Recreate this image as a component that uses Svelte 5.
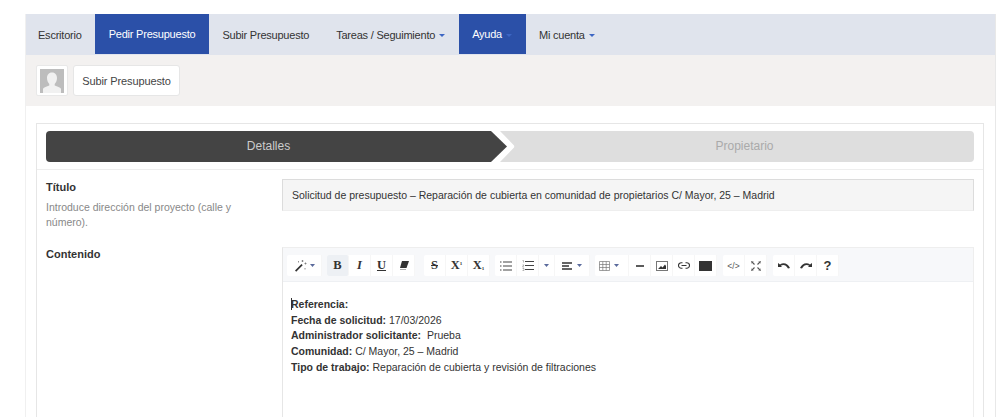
<script lang="ts">
  const navItems = [
    { label: 'Escritorio' },
    { label: 'Pedir Presupuesto', active: true },
    { label: 'Subir Presupuesto' },
    { label: 'Tareas / Seguimiento', caret: true },
    { label: 'Ayuda', caret: true, active: true },
    { label: 'Mi cuenta', caret: true }
  ];
</script>

{#snippet caret()}
  <svg class="tb-caret" width="5" height="3" viewBox="0 0 5 3"><path d="M0 0h5L2.500 3z" fill="#5a6a9c" /></svg>
{/snippet}

<div class="page">
  <nav class="nav">
    {#each navItems as item}
      <a class="nav-item" class:active={item.active} href="#top">
        {item.label}
        {#if item.caret}<span class="nav-caret"></span>{/if}
      </a>
    {/each}
  </nav>

  <div class="subheader">
    <div class="avatar">
      <svg width="24" height="24" viewBox="0 0 24 24">
        <rect width="24" height="24" fill="#bdbdbd" />
        <path d="M12 3.500c3.400 0 5 2.600 5 5.600 0 2.500-1 4.600-2.300 5.800v1.600c2.600 1 5.400 1.900 6.300 3.200V24H3v-4.300c.9-1.300 3.700-2.200 6.300-3.200v-1.600C8 13.700 7 11.600 7 9.100c0-3 1.600-5.600 5-5.600z" fill="#f1f1f1" />
      </svg>
    </div>
    <button class="sub-btn">Subir Presupuesto</button>
  </div>

  <section class="card">
    <div class="steps">
      <div class="step step-done">Detalles</div>
      <div class="step step-next">Propietario</div>
    </div>

    <div class="rows">
      <div class="row row-title">
        <div class="label-col">
          <div class="label">Título</div>
          <p class="help">Introduce dirección del proyecto (calle y número).</p>
        </div>
        <div class="title-input">Solicitud de presupuesto – Reparación de cubierta en comunidad de propietarios C/ Mayor, 25 – Madrid</div>
      </div>

      <div class="row">
        <div class="label-col"><div class="label">Contenido</div></div>
        <div class="editor">
          <div class="toolbar">
            <div class="group">
              <span class="tb tb-wand">
                <svg width="13" height="13" viewBox="0 0 13 13">
                  <path d="M1 11.500l6.500-6.500 1.200 1.200L2.200 12.700z" fill="#333" />
                  <path d="M8.500 1v2M7.500 2h2M11.500 3.500v2M10.500 4.500h2M11 9v1.500M4.500 2v1.500" stroke="#777" stroke-width=".8" />
                </svg>
                {@render caret()}
              </span>
            </div>

            <div class="group">
              <span class="tb serif pressed"><b>B</b></span>
              <span class="tb serif"><b><i>I</i></b></span>
              <span class="tb serif"><b class="under">U</b></span>
              <span class="tb">
                <svg width="10" height="9" viewBox="0 0 10 9"><path d="M3 0h7L7.500 7H1l.8-3z" fill="#333" /><path d="M1 8.500h6" stroke="#999" stroke-width=".8" /></svg>
              </span>
            </div>

            <div class="group group-gap">
              <span class="tb serif"><b class="strike">S</b></span>
              <span class="tb serif"><b>X<sup>1</sup></b></span>
              <span class="tb serif"><b>X<sub>1</sub></b></span>
            </div>

            <div class="group">
              <span class="tb">
                <svg width="12" height="10" viewBox="0 0 12 10"><path d="M0 1h1.500M3 1h9M0 5h1.500M3 5h9M0 9h1.500M3 9h9" stroke="#444" stroke-width="1.200" /></svg>
              </span>
              <span class="tb">
                <svg width="12" height="11" viewBox="0 0 12 11"><path d="M3 1.500h9M3 5.500h9M3 9.500h9" stroke="#444" stroke-width="1.200" /><path d="M.5.500h1v2M.5 5h1.500L.5 7h1.500M.5 8.500h1.500v2h-1.500" stroke="#888" stroke-width=".6" fill="none" /></svg>
              </span>
              <span class="tb tb-narrow">{@render caret()}</span>
              <span class="tb tb-align">
                <svg width="10" height="8" viewBox="0 0 10 8"><path d="M0 1h10M0 4h7M0 7h10" stroke="#333" stroke-width="1.300" /></svg>
                {@render caret()}
              </span>
            </div>

            <div class="group">
              <span class="tb tb-table">
                <svg width="11" height="10" viewBox="0 0 11 10"><path d="M.5.500h10v9H.5zM.5 3.500h10M.5 6.500h10M3.800.500v9M7.200.500v9" stroke="#777" fill="none" stroke-width=".7" /></svg>
                {@render caret()}
              </span>
              <span class="tb"><svg width="8" height="2" viewBox="0 0 8 2"><path d="M0 1h8" stroke="#333" stroke-width="1.600" /></svg></span>
              <span class="tb">
                <svg width="12" height="10" viewBox="0 0 12 10"><rect x=".5" y=".5" width="11" height="9" fill="none" stroke="#777" /><path d="M2 8l3-3 1.500 1.500L9 3.500 10 5v3z" fill="#333" /></svg>
              </span>
              <span class="tb">
                <svg width="12" height="7" viewBox="0 0 12 7"><path d="M4.500.7H3.300a2.800 2.800 0 0 0 0 5.600h1.200M7.500.7h1.200a2.800 2.800 0 0 1 0 5.600H7.500M3.500 3.500h5" fill="none" stroke="#333" stroke-width="1.100" /></svg>
              </span>
              <span class="tb"><span class="swatch"></span></span>
            </div>

            <div class="group group-code">
              <span class="tb tb-code">&lt;/&gt;</span>
              <span class="tb">
                <svg width="10" height="10" viewBox="0 0 10 10"><path d="M1 1l2.500 2.500M9 1L6.500 3.500M1 9l2.500-2.500M9 9L6.500 6.500" stroke="#555" stroke-width="1.100" /><path d="M0 2.500V0h2.500M7.500 0H10v2.500M10 7.500V10H7.500M2.500 10H0V7.500" stroke="#555" fill="none" stroke-width=".9" /></svg>
              </span>
            </div>

            <div class="group">
              <span class="tb">
                <svg width="12" height="8" viewBox="0 0 12 8"><path d="M0 1v4h4L2.800 3.800C5 2.200 8 2.700 10 6.500L12 6C10 1.500 5.500 0 2 2.500z" fill="#333" /></svg>
              </span>
              <span class="tb">
                <svg width="12" height="8" viewBox="0 0 12 8"><path d="M12 1v4H8l1.200-1.200C7 2.200 4 2.700 2 6.500L0 6C2 1.500 6.500 0 10 2.500z" fill="#333" /></svg>
              </span>
              <span class="tb tb-help">?</span>
            </div>
          </div>

          <div class="editor-body">
            <p><span class="cursor"></span><strong>Referencia:</strong></p>
            <p><strong>Fecha de solicitud:</strong> 17/03/2026</p>
            <p><strong>Administrador solicitante:</strong>&nbsp; Prueba</p>
            <p><strong>Comunidad:</strong> C/ Mayor, 25 – Madrid</p>
            <p><strong>Tipo de trabajo:</strong> Reparación de cubierta y revisión de filtraciones</p>
          </div>
        </div>
      </div>
    </div>
  </section>
</div>

<style>
  :global(body) {
    margin: 0;
    background: #fff;
    overflow: hidden;
  }

  .page {
    box-sizing: border-box;
    height: 403px;
    overflow: hidden;
    margin: 14px 4px 0 25px;
    border-right: 1px solid #e8e8e8;
    border-left: 1px solid #f0f0f0;
    font-family: "Liberation Sans", Arial, sans-serif;
    color: #333;
  }

  .nav {
    display: flex;
    height: 41px;
    background: #e0e4ed;
  }

  .nav-item {
    display: flex;
    align-items: center;
    gap: 4px;
    padding: 0 13.500px;
    font-size: 11px;
    color: #333;
    text-decoration: none;
    letter-spacing: -0.22px;
  }

  .nav-item:first-child {
    padding-left: 12px;
  }

  .nav-item.active {
    background: #2b50a8;
    color: #fff;
    height: 40px;
  }

  .nav-caret {
    width: 0;
    height: 0;
    border-left: 3px solid transparent;
    border-right: 3px solid transparent;
    border-top: 3px solid #3d66c4;
    margin-top: 2px;
  }

  .subheader {
    display: flex;
    align-items: center;
    gap: 5px;
    height: 51px;
    padding-left: 10px;
    background: #f3f1f0;
    box-sizing: border-box;
  }

  .avatar {
    box-sizing: border-box;
    width: 32px;
    height: 31px;
    background: #fff;
    border: 1px solid #e8e8e8;
    border-radius: 2px;
    display: flex;
    align-items: center;
    justify-content: center;
  }

  .sub-btn {
    height: 31px;
    width: 107px;
    padding: 0;
    background: #fff;
    border: 1px solid #e6e6e6;
    border-radius: 3px;
    font: 11px "Liberation Sans", Arial, sans-serif;
    color: #444;
    letter-spacing: -0.12px;
  }

  .card {
    box-sizing: border-box;
    margin: 17px 11px 0 10px;
    height: 400px;
    border: 1px solid #e6e6e6;
    background: #fff;
  }

  .steps {
    display: flex;
    padding: 7px 9px;
    border-bottom: 1px solid #eee;
  }

  .step {
    height: 31px;
    display: flex;
    align-items: center;
    justify-content: center;
    padding-bottom: 2px;
    box-sizing: border-box;
    font-size: 12px;
    position: relative;
  }

  .step-done {
    width: 445px;
    margin-right: 23px;
    flex: none;
    background: #444;
    color: #ccc;
    border-radius: 4px 0 0 4px;
  }

  .step-done::after {
    content: '';
    position: absolute;
    left: 100%;
    top: 0;
    width: 16px;
    height: 100%;
    background: #444;
    clip-path: polygon(0 0, 100% 50%, 0 100%);
  }

  .step-next {
    flex: 1;
    background: #dedede;
    color: #aaa;
    border-radius: 0 4px 4px 0;
    border-left: 1px solid #e8e8e8;
  }

  .step-next::before {
    content: '';
    position: absolute;
    right: 100%;
    top: 0;
    width: 15px;
    height: 100%;
    background: #dedede;
    clip-path: polygon(0 0, 100% 0, 100% 100%, 0 100%, 100% 50%);
  }

  .rows {
    padding: 9px 9px 0;
  }

  .row {
    display: flex;
  }

  .row-title {
    margin-bottom: 16px;
  }

  .label-col {
    width: 236px;
    flex: none;
  }

  .label {
    padding-top: 1px;
    font-size: 11px;
    font-weight: bold;
    line-height: 14px;
    color: #333;
  }

  .help {
    margin: 6px 0 0;
    width: 200px;
    font-size: 10.500px;
    line-height: 15px;
    color: #888;
  }

  .title-input {
    flex: 1;
    box-sizing: border-box;
    height: 32px;
    padding: 0 9px;
    display: flex;
    align-items: center;
    background: #f5f5f5;
    border: 1px solid #dcdcdc;
    border-bottom-color: #eee;
    font-size: 10.500px;
    color: #333;
    white-space: nowrap;
  }

  .editor {
    flex: 1;
    margin-top: 1px;
    border-left: 1px solid #e6e6e6;
    border-top: 1px solid #eee;
    border-right: 1px solid #eee;
  }

  .toolbar {
    display: flex;
    gap: 5px;
    height: 34px;
    box-sizing: border-box;
    padding: 7px 0 0 4px;
    background: #f7f8fa;
    border-bottom: 1px solid #eef0f3;
  }

  .group {
    display: flex;
    height: 21px;
    background: #fff;
    border-radius: 2px;
  }

  .group-gap {
    margin-left: 4px;
  }

  .group-code {
    margin-left: 1px;
    margin-right: 1px;
  }

  .tb {
    width: 22px;
    height: 21px;
    display: flex;
    align-items: center;
    justify-content: center;
    gap: 3px;
    color: #333;
    font-size: 11px;
    border-right: 1px solid #f6f6f6;
    box-sizing: border-box;
  }

  .tb-wand {
    width: 35px;
  }

  .tb-narrow {
    width: 16px;
  }

  .tb-align {
    width: 35px;
    gap: 5px;
  }

  .tb-table {
    width: 34px;
    gap: 4px;
    padding-right: 5px;
  }

  .serif {
    font-family: "Liberation Serif", serif;
    font-size: 12.500px;
  }

  .pressed {
    background: #edf0f4;
    border-radius: 2px;
  }

  .under {
    text-decoration: underline;
  }

  .strike {
    text-decoration: line-through;
  }

  sup,
  sub {
    font-size: 5px;
    line-height: 0;
  }

  sup {
    vertical-align: 4px;
  }

  sub {
    vertical-align: -1px;
  }

  .swatch {
    width: 13px;
    height: 10px;
    background: #333;
  }

  .tb-code {
    font-size: 8.500px;
    color: #555;
  }

  .tb-help {
    font-size: 13px;
    font-weight: bold;
  }

  .editor-body {
    min-height: 200px;
    padding: 15px 8px 0;
    font-size: 10.500px;
    line-height: 15.700px;
    color: #333;
  }

  .editor-body p {
    margin: 0;
  }

  .cursor {
    display: inline-block;
    width: 1px;
    height: 12px;
    margin-right: -1px;
    vertical-align: -2px;
    background: #333;
  }
</style>
